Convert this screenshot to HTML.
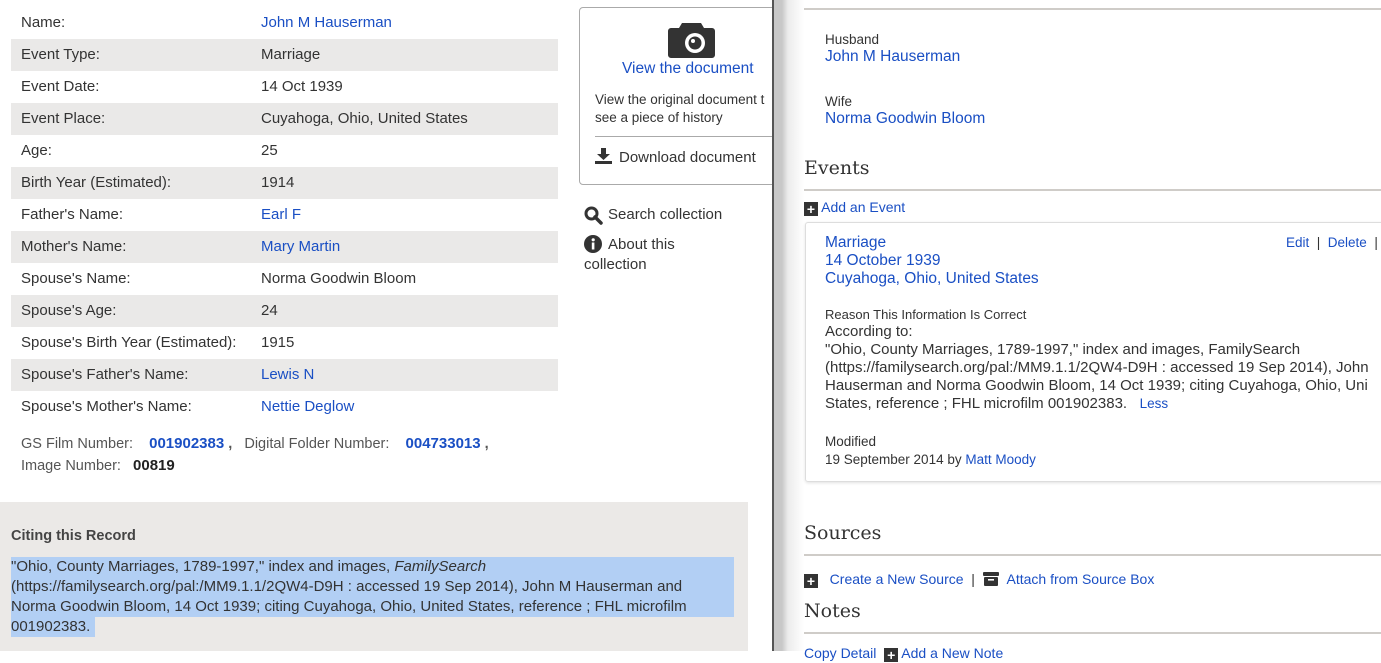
<!DOCTYPE html>
<html><head><meta charset="utf-8"><style>
*{margin:0;padding:0;box-sizing:border-box}
body{width:1381px;height:651px;overflow:hidden;background:#fff;font-family:"Liberation Sans",sans-serif;color:#333;position:relative;font-size:14px}
.a{position:absolute;white-space:nowrap}
.row{position:absolute;left:11px;width:547px;height:32px;line-height:32px;font-size:15px}
.row.g{background:#eae9e8}
.row .l{position:absolute;left:10px}
.row .v{position:absolute;left:250px}
.lk{color:#1a4fc4}
.h{font-family:"DejaVu Serif","Liberation Serif",serif;font-size:19px;color:#333}
.hr{position:absolute;left:804px;width:577px;height:2px;background:#cfccc8}
.plus{display:inline-block;width:14px;height:14px;background:#333;color:#fff;font-weight:bold;font-size:14px;line-height:14px;text-align:center;vertical-align:-2px}
</style></head><body>

<div class="row" style="top:7px"><span class="l">Name:</span><span class="v lk">John M Hauserman</span></div>
<div class="row g" style="top:39px"><span class="l">Event Type:</span><span class="v">Marriage</span></div>
<div class="row" style="top:71px"><span class="l">Event Date:</span><span class="v">14 Oct 1939</span></div>
<div class="row g" style="top:103px"><span class="l">Event Place:</span><span class="v">Cuyahoga, Ohio, United States</span></div>
<div class="row" style="top:135px"><span class="l">Age:</span><span class="v">25</span></div>
<div class="row g" style="top:167px"><span class="l">Birth Year (Estimated):</span><span class="v">1914</span></div>
<div class="row" style="top:199px"><span class="l">Father's Name:</span><span class="v lk">Earl F</span></div>
<div class="row g" style="top:231px"><span class="l">Mother's Name:</span><span class="v lk">Mary Martin</span></div>
<div class="row" style="top:263px"><span class="l">Spouse's Name:</span><span class="v">Norma Goodwin Bloom</span></div>
<div class="row g" style="top:295px"><span class="l">Spouse's Age:</span><span class="v">24</span></div>
<div class="row" style="top:327px"><span class="l">Spouse's Birth Year (Estimated):</span><span class="v">1915</span></div>
<div class="row g" style="top:359px"><span class="l">Spouse's Father's Name:</span><span class="v lk">Lewis N</span></div>
<div class="row" style="top:391px"><span class="l">Spouse's Mother's Name:</span><span class="v lk">Nettie Deglow</span></div>

<div class="a" style="left:21px;top:435px;font-size:14.5px;color:#555">GS Film Number: &nbsp;&nbsp;&nbsp;<b class="lk" style="font-size:15px">001902383</b> <b>,</b> &nbsp;&nbsp;Digital Folder Number: &nbsp;&nbsp;&nbsp;<b class="lk" style="font-size:15px">004733013</b> <b>,</b></div>
<div class="a" style="left:21px;top:457px;font-size:14.5px;color:#555">Image Number: &nbsp;&nbsp;<b style="color:#222;font-size:15px">00819</b></div>

<div class="a" style="left:0;top:502px;width:748px;height:149px;background:#ebe9e7"></div>
<div class="a" style="left:11px;top:528px;font-weight:bold;font-size:14.5px;color:#444">Citing this Record</div>
<div class="a" style="left:11px;top:557px;width:723px;height:60px;background:#b2cff4"></div>
<div class="a" style="left:11px;top:617px;width:84px;height:20px;background:#b2cff4"></div>
<div class="a" style="left:11px;top:557px;line-height:20px;font-size:15px;color:#333;white-space:normal;width:740px">"Ohio, County Marriages, 1789-1997," index and images, <i>FamilySearch</i><br>(https://familysearch.org/pal:/MM9.1.1/2QW4-D9H : accessed 19 Sep 2014), John M Hauserman and<br>Norma Goodwin Bloom, 14 Oct 1939; citing Cuyahoga, Ohio, United States, reference ; FHL microfilm<br>001902383.</div>

<div class="a" style="left:579px;top:7px;width:200px;height:178px;border:1px solid #aaa;border-radius:4px"></div>
<svg class="a" style="left:667px;top:22px" width="49" height="36" viewBox="0 0 49 36"><path d="M15 1h19l3 5h8a3 3 0 0 1 3 3v24a3 3 0 0 1-3 3H4a3 3 0 0 1-3-3V9a3 3 0 0 1 3-3h8z" fill="#333"/><circle cx="28" cy="21" r="10" fill="#fff"/><circle cx="28" cy="21" r="6.5" fill="#333"/><circle cx="26" cy="19" r="2" fill="#fff"/></svg>
<div class="a lk" style="left:622px;top:60px;font-size:15.5px">View the document</div>
<div class="a" style="left:595px;top:91px;font-size:13.5px;line-height:18px">View the original document t<br>see a piece of history</div>
<div class="a" style="left:595px;top:136px;width:177px;height:1px;background:#aaa"></div>
<svg class="a" style="left:595px;top:148px" width="17" height="16" viewBox="0 0 17 16"><path d="M6 0h5v6h4l-6.5 6L2 6h4z" fill="#333"/><rect x="0" y="13" width="17" height="3" fill="#333"/></svg>
<div class="a" style="left:619px;top:149px;font-size:15px">Download document</div>
<div class="a" style="left:772px;top:0;width:2px;height:651px;background:#555"></div>

<svg class="a" style="left:584px;top:206px" width="19" height="19" viewBox="0 0 19 19"><circle cx="7.5" cy="7.5" r="5.5" fill="none" stroke="#333" stroke-width="3"/><path d="M11 11l6 6" stroke="#333" stroke-width="3.5" stroke-linecap="round"/></svg>
<div class="a" style="left:608px;top:206px;font-size:15px">Search collection</div>
<svg class="a" style="left:584px;top:235px" width="18" height="18" viewBox="0 0 18 18"><circle cx="9" cy="9" r="9" fill="#333"/><rect x="7.8" y="7.5" width="2.6" height="7" fill="#fff"/><circle cx="9.2" cy="4.8" r="1.6" fill="#fff"/></svg>
<div class="a" style="left:608px;top:236px;font-size:15px">About this</div>
<div class="a" style="left:584px;top:256px;font-size:15px">collection</div>

<div class="a" style="left:774px;top:0;width:30px;height:651px;background:linear-gradient(to right,#c8c8c8 0,#c8c8c8 8px,#ececec 14px,#fff 30px)"></div>

<div class="hr" style="top:8px"></div>
<div class="a" style="left:825px;top:32px;font-size:13.5px">Husband</div>
<div class="a lk" style="left:825px;top:48px;font-size:15.5px">John M Hauserman</div>
<div class="a" style="left:825px;top:94px;font-size:13.5px">Wife</div>
<div class="a lk" style="left:825px;top:110px;font-size:15.5px">Norma Goodwin Bloom</div>
<div class="a h" style="left:804px;top:157px">Events</div>
<div class="hr" style="top:189px"></div>
<div class="a" style="left:804px;top:199px;font-size:14px"><span class="plus">+</span> <span class="lk">Add an Event</span></div>

<div class="a" style="left:805px;top:222px;width:590px;height:260px;border:1px solid #ddd;border-radius:3px;box-shadow:0 1px 3px rgba(0,0,0,.12)"></div>
<div class="a lk" style="left:825px;top:234px;font-size:15.5px;line-height:18px">Marriage<br>14 October 1939<br>Cuyahoga, Ohio, United States</div>
<div class="a lk" style="left:1286px;top:235px;font-size:13.5px">Edit <span style="color:#333">&nbsp;|&nbsp;</span> Delete <span style="color:#333">&nbsp;|</span></div>
<div class="a" style="left:825px;top:307px;font-size:13px">Reason This Information Is Correct</div>
<div class="a" style="left:825px;top:323px;font-size:15px;line-height:18px">According to:<br>"Ohio, County Marriages, 1789-1997," index and images, FamilySearch<br>(https://familysearch.org/pal:/MM9.1.1/2QW4-D9H : accessed 19 Sep 2014), John<br>Hauserman and Norma Goodwin Bloom, 14 Oct 1939; citing Cuyahoga, Ohio, Uni<br>States, reference ; FHL microfilm 001902383. &nbsp;&nbsp;<span class="lk" style="font-size:13.5px">Less</span></div>
<div class="a" style="left:825px;top:434px;font-size:13.5px">Modified</div>
<div class="a" style="left:825px;top:452px;font-size:13.5px">19 September 2014 by <span class="lk">Matt Moody</span></div>

<div class="a h" style="left:804px;top:522px">Sources</div>
<div class="hr" style="top:554px"></div>
<div class="a" style="left:804px;top:571px;font-size:14px"><span class="plus">+</span> &nbsp;&nbsp;<span class="lk">Create a New Source</span> &nbsp;<span style="color:#333">|</span> &nbsp;<svg width="16" height="14" viewBox="0 0 16 14" style="vertical-align:-2px"><rect x="0" y="0" width="16" height="4" rx="1" fill="#333"/><rect x="1" y="5" width="14" height="9" rx="1" fill="#333"/><rect x="5" y="7" width="6" height="1.6" fill="#fff"/></svg> &nbsp;<span class="lk">Attach from Source Box</span></div>
<div class="a h" style="left:804px;top:600px">Notes</div>
<div class="hr" style="top:632px"></div>
<div class="a" style="left:804px;top:645px;font-size:14px"><span class="lk">Copy Detail</span> &nbsp;<span class="plus">+</span> <span class="lk">Add a New Note</span></div>
</body></html>
